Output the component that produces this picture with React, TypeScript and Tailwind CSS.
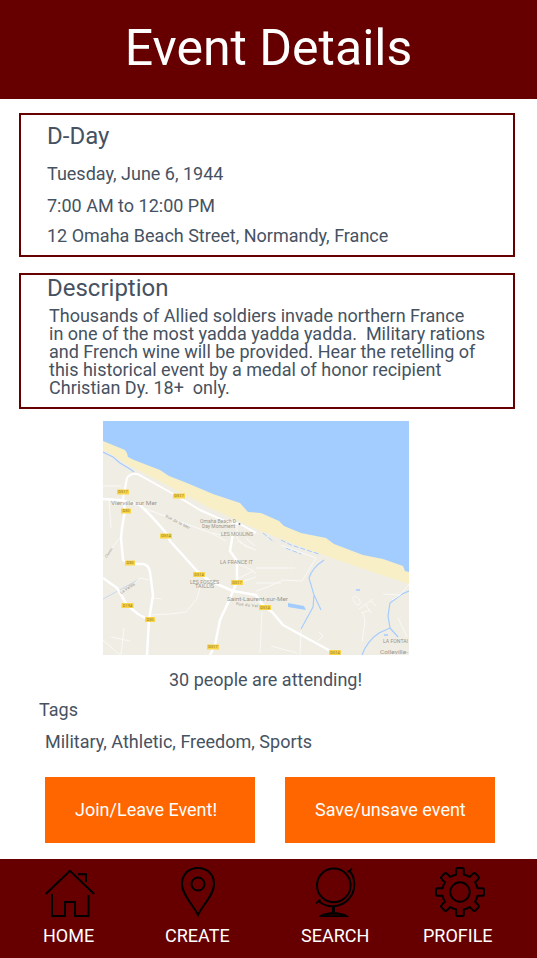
import type { ReactNode } from "react";

const mapLabels: { x: number; y: number; text: string; size?: number; width: number }[] = [
  { x: 8, y: 84, text: "Vierville sur Mer", size: 5.5, width: 46 },
  { x: 97, y: 102, text: "Omaha Beach D", width: 36 },
  { x: 99, y: 107, text: "Day Monument", width: 33 },
  { x: 118, y: 115, text: "LES MOULINS", width: 32 },
  { x: 117, y: 142.5, text: "LA FRANCE IT", width: 33 },
  { x: 87, y: 162.5, text: "LES FOSSÉS", width: 29 },
  { x: 92, y: 167, text: "TAILLIS", width: 19 },
  { x: 124, y: 180, text: "Saint-Laurent-sur-Mer", size: 5.5, width: 61 },
  { x: 280, y: 222, text: "LA FONTAI", width: 25 },
  { x: 277, y: 233.3, text: "Colleville-", size: 5, width: 28 },
];

const roadTags = [
  [20, 71, "D517"], [23, 90, "D30"], [76, 75, "D517"], [63, 115, "D514"],
  [27, 142, "D30"], [96, 153.5, "D514"], [134, 161.5, "D517"], [24.5, 184.5, "D194"],
  [47, 198.5, "D30"], [110, 226, "D517"], [162, 186.5, "D514"], [232, 231.5, "D514"],
] as const;

function EventMap() {
  return (
    <svg className="ml-[103px] mt-3 block h-[234px] w-[306px]" viewBox="0 0 306 234" fontFamily="Roboto, sans-serif">
      <rect width="306" height="234" fill="#a3ccff" />
      <path d="M0 20L22 29Q24 31 25 36L31 39L57 49L66 55L84 62L110 73L137 82L145 91L158 92L176 100L181 105L198 112L223 117L231 123L260 134L280 138L300 145L302 150L306 151V234H0Z" fill="#f8efc6" />
      <path d="M0 28L25 44L64 64L107 87L153 108L173 116L220 134L264 149L306 163V234H0Z" fill="#f0ede5" />
      <g fill="none" stroke="#a3ccff">
        <path d="M0 31L10 36L17 42L27 48L31 51" strokeWidth="1.2" />
        <path d="M221 139Q209 147 206 157L211 174L210 186L198 208M211 174L218 189" strokeWidth="1.1" />
        <path d="M306 170L299 173L287 182L285 195L287 207L276 212Q264 220 259 234M287 207L295 216" strokeWidth="1.2" />
        <path d="M0 178L35 159" stroke="#c7d7ee" />
        <path d="M160 112L171 121M178 119L188 124L216 133M183 127L198 133" strokeDasharray="5 2" />
        <path d="M281 214h4M253 169h4" strokeWidth="1.5" />
      </g>
      <path d="M185 182L201 185L203 189L185 186Z" fill="#a3ccff" />
      <g fill="none" stroke="#faf9f6" strokeWidth="1">
        <path d="M6 79L8 107M0 65H18M40 87L108 112L123 120M134 101L134 117L142 125L153 129M0 138L17 117M108 112L118 114M134 120L150 128M143 117L152 125M133 142L149 149L153 153M134 158L150 150M138 161L153 156" />
        <path d="M178 124L213 137L199 160L180 159L165 166L153 170M153 162H178M153 147H192M159 191L157 232M168 225L194 232M198 210L197 234M216 211L220 215L215 220" />
        <path d="M46 159L37 157L31 163M50 177L59 178M46 194L67 193L83 191L94 178L97 166M0 219L17 234M8 216L27 220M21 207L18 234M306 163L297 174L280 173M297 174L289 179" />
        <path d="M252 182C247 175 252 173 256 178C259 182 256 187 252 182M256 188L270 178M258 192L267 189M263 184L268 192M260 192L262 200L259 221M268 180L273 185M295 197L304 216" />
      </g>
      <g fill="none" stroke="#fff" strokeWidth="2.5" strokeLinejoin="round">
        <path d="M0 78L17 79L37 84L50 97L64 113L67 120L94 150L107 160L130 170L153 174L159 183L170 192L180 204L231 232" />
        <path d="M20 78L24 57Q30 49 40 56L74 75L97 89L124 101L137 103L153 112" strokeWidth="2" />
        <path d="M20 78L22 89L19 107L18 117L20 139L27 143H40Q46 144 47 151L50 174L46 199L44 234" />
        <path d="M0 157L14 167L24 184L35 193L46 199" />
        <path d="M130 112L127 130L134 140L134 161L124 184L117 199L112 224L107 234" />
      </g>
      <g fill="#99968c">
        {mapLabels.map((l) => (
          <text key={l.text} x={l.x} y={l.y} fontSize={l.size ?? 4.6} textLength={l.width} lengthAdjust="spacingAndGlyphs">{l.text}</text>
        ))}
        <text x="62" y="96" fontSize="4" textLength="27" transform="rotate(27 62 96)">Rue de la Mer</text>
        <text x="18" y="173" fontSize="4" textLength="17" transform="rotate(-33 18 173)">La Vallée</text>
        <text x="3.5" y="137" fontSize="3.5" textLength="11" transform="rotate(-55 3.5 137)">Chemin</text>
        <text x="133" y="184" fontSize="4" textLength="22" transform="rotate(6 133 184)">Rue du Val</text>
      </g>
      <circle cx="136.5" cy="103" r="1" fill="#777" />
      {roadTags.map(([x, y, name]) => (
        <g key={`${x}-${y}`}>
          <rect x={x - (name.length > 3 ? 6 : 5)} y={y - 2.5} width={name.length > 3 ? 12 : 10} height="5" rx="0.6" fill="#f8d648" />
          <text x={x} y={y + 1.4} textAnchor="middle" fontSize="4" fill="#8a742a">{name}</text>
        </g>
      ))}
    </svg>
  );
}

function Icon({ children }: { children: ReactNode }) {
  return (
    <svg className="block size-[50px]" viewBox="0 0 50 50" fill="none" stroke="#000" strokeWidth="2">
      {children}
    </svg>
  );
}

function NavItem({ label, className, iconClass, children }: { label: string; className: string; iconClass: string; children: ReactNode }) {
  return (
    <a className={`flex flex-col ${className}`}>
      <span className={iconClass}><Icon>{children}</Icon></span>
      <span className="mt-[10px] text-lg leading-[18px] whitespace-nowrap text-white">{label}</span>
    </a>
  );
}

const gearOutline =
  "M21.2 7.5V2.5Q21.2 1 22.7 1H27.3Q28.8 1 28.8 2.5V7.5Q32 8.3 34.7 9.9L38.2 6.5Q39.3 5.5 40.4 6.5L43.5 9.6Q44.5 10.7 43.5 11.8L40.1 15.3Q41.7 18 42.5 21.2H47.5Q49 21.2 49 22.7V27.3Q49 28.8 47.5 28.8H42.5Q41.7 32 40.1 34.7L43.5 38.2Q44.5 39.3 43.5 40.4L40.4 43.5Q39.3 44.5 38.2 43.5L34.7 40.1Q32 41.7 28.8 42.5V47.5Q28.8 49 27.3 49H22.7Q21.2 49 21.2 47.5V42.5Q18 41.7 15.3 40.1L11.8 43.5Q10.7 44.5 9.6 43.5L6.5 40.4Q5.5 39.3 6.5 38.2L9.9 34.7Q8.3 32 7.5 28.8H2.5Q1 28.8 1 27.3V22.7Q1 21.2 2.5 21.2H7.5Q8.3 18 9.9 15.3L6.5 11.8Q5.5 10.7 6.5 9.6L9.6 6.5Q10.7 5.5 11.8 6.5L15.3 9.9Q18 8.3 21.2 7.5Z";

export default function App() {
  return (
    <div className="flex h-[958px] w-[537px] flex-col overflow-hidden bg-white font-['Roboto',sans-serif] text-lg leading-[18px] text-[#465261]">
      <header className="h-[99px] bg-[#660000] pt-[23px] text-center text-[50px] leading-[50px] text-white">
        <h1>Event Details</h1>
      </header>

      <section className="mx-[19px] mt-[14px] h-[144px] w-[496px] border-2 border-[#660000] pl-[26px] pt-[9px]">
        <h2 className="text-2xl leading-6">D-Day</h2>
        <p className="mt-[17px]">Tuesday, June 6, 1944</p>
        <p className="mt-[14px]">7:00 AM to 12:00 PM</p>
        <p className="mt-3">12 Omaha Beach Street, Normandy, France</p>
      </section>

      <section className="mx-[19px] mt-4 h-[136px] w-[496px] border-2 border-[#660000] pl-[26px] pt-px">
        <h2 className="text-2xl leading-6">Description</h2>
        <p className="ml-[2px] mt-[7px] whitespace-pre">
          {"Thousands of Allied soldiers invade northern France\nin one of the most yadda yadda yadda.  Military rations\nand French wine will be provided. Hear the retelling of\nthis historical event by a medal of honor recipient\nChristian Dy. 18+  only."}
        </p>
      </section>

      <EventMap />

      <p className="ml-[169px] mt-4">30 people are attending!</p>
      <p className="ml-[39px] mt-3">Tags</p>
      <p className="ml-[45px] mt-[14px]">Military, Athletic, Freedom, Sports</p>

      <div className="ml-[45px] mt-[26px] flex gap-[30px] text-white">
        <button className="h-[66px] w-[210px] bg-[#ff6600] pl-[30px] text-left">Join/Leave Event!</button>
        <button className="h-[66px] w-[210px] bg-[#ff6600] pl-[30px] text-left">Save/unsave event</button>
      </div>

      <nav className="mt-4 flex h-[99px] bg-[#660000] pl-[43px] pt-2">
        <NavItem label="HOME" className="w-[122px]" iconClass="pl-[2px]">
          <path d="M0.8 27L25 3.8L49.2 27M33 7.2H41V15M7 27V49H20V35H30V49H43.5V28" />
        </NavItem>
        <NavItem label="CREATE" className="w-[136px]" iconClass="pl-[8px]">
          <path d="M25 48C21 39 9 28 9 17C9 7 16 1 25 1S41 7 41 17C41 28 29 39 25 48Z" />
          <circle cx="25" cy="17" r="6.5" />
        </NavItem>
        <NavItem label="SEARCH" className="w-[122px]" iconClass="pl-[10px]">
          <circle cx="22.8" cy="18.4" r="16.8" />
          <path d="M38.5 3.7A21.8 21.8 0 0 1 8 34.5M36.5 5L41 1.7M5 36.3L9.5 32.7" />
          <path d="M22.5 40V45.500" strokeWidth="3" />
          <path d="M7.500 50C12 43.700 33 43.700 38 50Z" fill="#000" stroke="none" />
          <path d="M14.500 48.600Q22.500 46 30.500 48.600Z" fill="#2a0000" stroke="none" />
        </NavItem>
        <NavItem label="PROFILE" className="w-[80px]" iconClass="pl-3">
          <path d={gearOutline} />
          <circle cx="25" cy="25" r="9.7" />
        </NavItem>
      </nav>
    </div>
  );
}
